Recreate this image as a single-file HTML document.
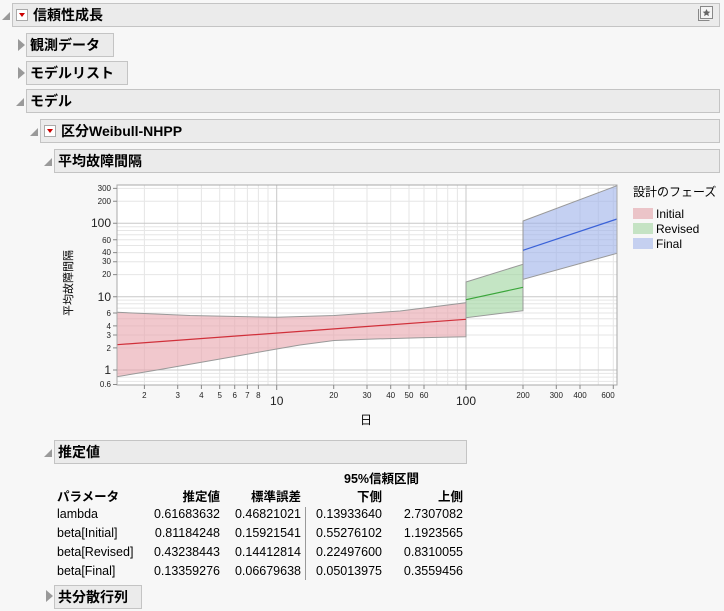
<!DOCTYPE html>
<html><head><meta charset="utf-8"><style>
body{margin:0;width:724px;height:611px;background:#f7f7f7;position:relative;overflow:hidden;font-family:"Liberation Sans","Noto Sans CJK JP",sans-serif;}
.box{position:absolute;background:#ebebeb;border:1px solid #c4c4c4;box-sizing:border-box;font-weight:bold;font-size:14px;line-height:22px;color:#000;}
.tri{position:absolute;width:0;height:0;}
.open{border-left:8px solid transparent;border-bottom:8px solid #9a9a9a;}
.closed{border-top:6px solid transparent;border-bottom:6px solid transparent;border-left:7px solid #999;}
.red{position:absolute;width:12px;height:12px;border:1px solid #aaa;background:#fff;box-sizing:border-box;}
.red::after{content:"";position:absolute;left:2px;top:3px;border-left:3.5px solid transparent;border-right:3.5px solid transparent;border-top:4px solid #c00;}
.t{position:absolute;font-size:12.5px;white-space:nowrap;}
.r{text-align:right;}
</style></head><body>

<div class="tri open" style="left:2px;top:12px"></div>
<div class="box" style="left:12px;top:3px;width:708px;height:24px;padding-left:20px">信頼性成長</div>
<div class="red" style="left:16px;top:9px"></div>
<svg style="position:absolute;left:696px;top:6px" width="18" height="17"><rect x="4.5" y="0.5" width="12" height="12" fill="#f4f4f4" stroke="#888"/><path d="M2.5 3v11.5h11" fill="none" stroke="#888"/><path d="M10.5 3l1.2 2.5 2.6.3-2 1.7.6 2.6-2.4-1.4-2.4 1.4.6-2.6-2-1.7 2.6-.3z" fill="#666"/></svg>

<div class="tri closed" style="left:18px;top:39px"></div>
<div class="box" style="left:26px;top:33px;width:88px;height:24px;padding-left:3px">観測データ</div>
<div class="tri closed" style="left:18px;top:67px"></div>
<div class="box" style="left:26px;top:61px;width:102px;height:24px;padding-left:3px">モデルリスト</div>
<div class="tri open" style="left:16px;top:98px"></div>
<div class="box" style="left:26px;top:89px;width:694px;height:24px;padding-left:3px">モデル</div>
<div class="tri open" style="left:30px;top:128px"></div>
<div class="box" style="left:40px;top:119px;width:680px;height:24px;padding-left:20px">区分Weibull-NHPP</div>
<div class="red" style="left:44px;top:125px"></div>
<div class="tri open" style="left:44px;top:158px"></div>
<div class="box" style="left:54px;top:149px;width:666px;height:24px;padding-left:3px">平均故障間隔</div>

<svg style="position:absolute;left:0;top:0" width="724" height="440" font-family="Liberation Sans, sans-serif">
<rect x="117" y="185" width="500" height="200" fill="#fff"/>
<g stroke="#e6e6e6" stroke-width="1">
<path d="M117 381.4H617M117 377.1H617M117 373.4H617M117 347.9H617M117 335H617M117 325.9H617M117 318.8H617M117 313H617M117 308.1H617M117 303.8H617M117 300.1H617M117 274.6H617M117 261.7H617M117 252.6H617M117 245.5H617M117 239.7H617M117 234.8H617M117 230.5H617M117 226.8H617M117 201.3H617M117 188.4H617"/>
<path d="M144.4 185V385M177.7 185V385M201.4 185V385M219.7 185V385M234.7 185V385M247.4 185V385M258.4 185V385M268 185V385M333.7 185V385M367 185V385M390.7 185V385M409 185V385M424 185V385M436.7 185V385M447.7 185V385M457.4 185V385M523 185V385M556.3 185V385M580 185V385M598.3 185V385M613.3 185V385"/>
</g>
<g stroke="#c8c8c8"><path d="M117 370H617M117 296.7H617M117 223.3H617M276.7 185V385M466 185V385"/></g>
<path d="M117 312.3L190 315.5L276.7 317.3L334 315.5L400 311L466 302.7V336.7L420 337.8L367 339.2L334 340.5L300 345L276.7 349L240 355.5L200 362.5L160 369.5L117 376.7Z" fill="#e8a3ab" fill-opacity="0.6" stroke="#999"/>
<path d="M117 344.7L466 319.3" stroke="#d0303a" stroke-width="1.2"/>
<path d="M466 282L523 264.3V310.7L466 317.7Z" fill="#9dd39c" fill-opacity="0.6" stroke="#999"/>
<path d="M466 299.7L523 287.3" stroke="#3aa63a" stroke-width="1.2"/>
<path d="M523 221L617 185.7V253.3L523 279.3Z" fill="#9db1ea" fill-opacity="0.6" stroke="#999"/>
<path d="M523 250.3L617 219" stroke="#3a62d8" stroke-width="1.2"/>
<rect x="117" y="185" width="500" height="200" fill="none" stroke="#a8a8a8"/>
<g stroke="#888"><path d="M113 188.4h4M113 201.3h4M113 223.3h4M113 239.7h4M113 252.6h4M113 261.7h4M113 274.6h4M113 296.7h4M113 313h4M113 325.9h4M113 335h4M113 347.9h4M113 370h4M113 384.5h4"/><path d="M144.4 385v4M177.7 385v4M201.4 385v4M219.7 385v4M234.7 385v4M247.4 385v4M258.4 385v4M276.7 385v5M333.7 385v4M367 385v4M390.7 385v4M409 385v4M424 385v4M466 385v5M523 385v4M556.3 385v4M580 385v4M613.3 385v4"/></g>
<g font-size="8" text-anchor="end" fill="#222">
<text x="111" y="191">300</text><text x="111" y="204">200</text><text x="111" y="243">60</text><text x="111" y="255">40</text><text x="111" y="264">30</text><text x="111" y="277">20</text><text x="111" y="316">6</text><text x="111" y="329">4</text><text x="111" y="338">3</text><text x="111" y="351">2</text><text x="111" y="387">0.6</text>
</g>
<g font-size="12" text-anchor="end" fill="#222"><text x="111" y="227">100</text><text x="111" y="301">10</text><text x="111" y="374">1</text></g>
<g font-size="8" text-anchor="middle" fill="#222">
<text x="144.4" y="398">2</text><text x="177.7" y="398">3</text><text x="201.4" y="398">4</text><text x="219.7" y="398">5</text><text x="234.7" y="398">6</text><text x="247.4" y="398">7</text><text x="258.4" y="398">8</text><text x="333.7" y="398">20</text><text x="367" y="398">30</text><text x="390.7" y="398">40</text><text x="409" y="398">50</text><text x="424" y="398">60</text><text x="523" y="398">200</text><text x="556.3" y="398">300</text><text x="580" y="398">400</text><text x="608" y="398">600</text>
</g>
<g font-size="12" text-anchor="middle" fill="#222"><text x="276.7" y="405">10</text><text x="466" y="405">100</text></g>
<text x="366" y="424" font-size="12" text-anchor="middle" font-family="Noto Sans CJK JP, sans-serif">日</text>
<text transform="translate(72,283) rotate(-90)" font-size="11" text-anchor="middle" font-family="Noto Sans CJK JP, sans-serif">平均故障間隔</text>
<text x="633" y="196" font-size="12" font-family="Noto Sans CJK JP, sans-serif">設計のフェーズ</text>
<rect x="633" y="208" width="20" height="11" fill="#ebc4c8"/><text x="656" y="218" font-size="12">Initial</text>
<rect x="633" y="223" width="20" height="11" fill="#c5e3c4"/><text x="656" y="233" font-size="12">Revised</text>
<rect x="633" y="238" width="20" height="11" fill="#c5d0f0"/><text x="656" y="248" font-size="12">Final</text>
</svg>

<div class="tri open" style="left:44px;top:449px"></div>
<div class="box" style="left:54px;top:440px;width:413px;height:24px;padding-left:3px">推定値</div>
<div class="t" style="left:344px;top:468px;font-weight:bold">95%信頼区間</div>
<div class="t" style="left:57px;top:486px;font-weight:bold">パラメータ</div>
<div class="t r" style="left:140px;width:80px;top:486px;font-weight:bold">推定値</div>
<div class="t r" style="left:221px;width:80px;top:486px;font-weight:bold">標準誤差</div>
<div class="t r" style="left:302px;width:80px;top:486px;font-weight:bold">下側</div>
<div class="t r" style="left:383px;width:80px;top:486px;font-weight:bold">上側</div>
<div style="position:absolute;left:305px;top:507px;width:1px;height:73px;background:#999"></div>
<div class="t" style="left:57px;top:505px;line-height:19px">lambda<br>beta[Initial]<br>beta[Revised]<br>beta[Final]</div>
<div class="t r" style="left:120px;width:100px;top:505px;line-height:19px">0.61683632<br>0.81184248<br>0.43238443<br>0.13359276</div>
<div class="t r" style="left:201px;width:100px;top:505px;line-height:19px">0.46821021<br>0.15921541<br>0.14412814<br>0.06679638</div>
<div class="t r" style="left:282px;width:100px;top:505px;line-height:19px">0.13933640<br>0.55276102<br>0.22497600<br>0.05013975</div>
<div class="t r" style="left:363px;width:100px;top:505px;line-height:19px">2.7307082<br>1.1923565<br>0.8310055<br>0.3559456</div>

<div class="tri closed" style="left:46px;top:590px"></div>
<div class="box" style="left:54px;top:585px;width:88px;height:24px;padding-left:3px">共分散行列</div>
</body></html>
